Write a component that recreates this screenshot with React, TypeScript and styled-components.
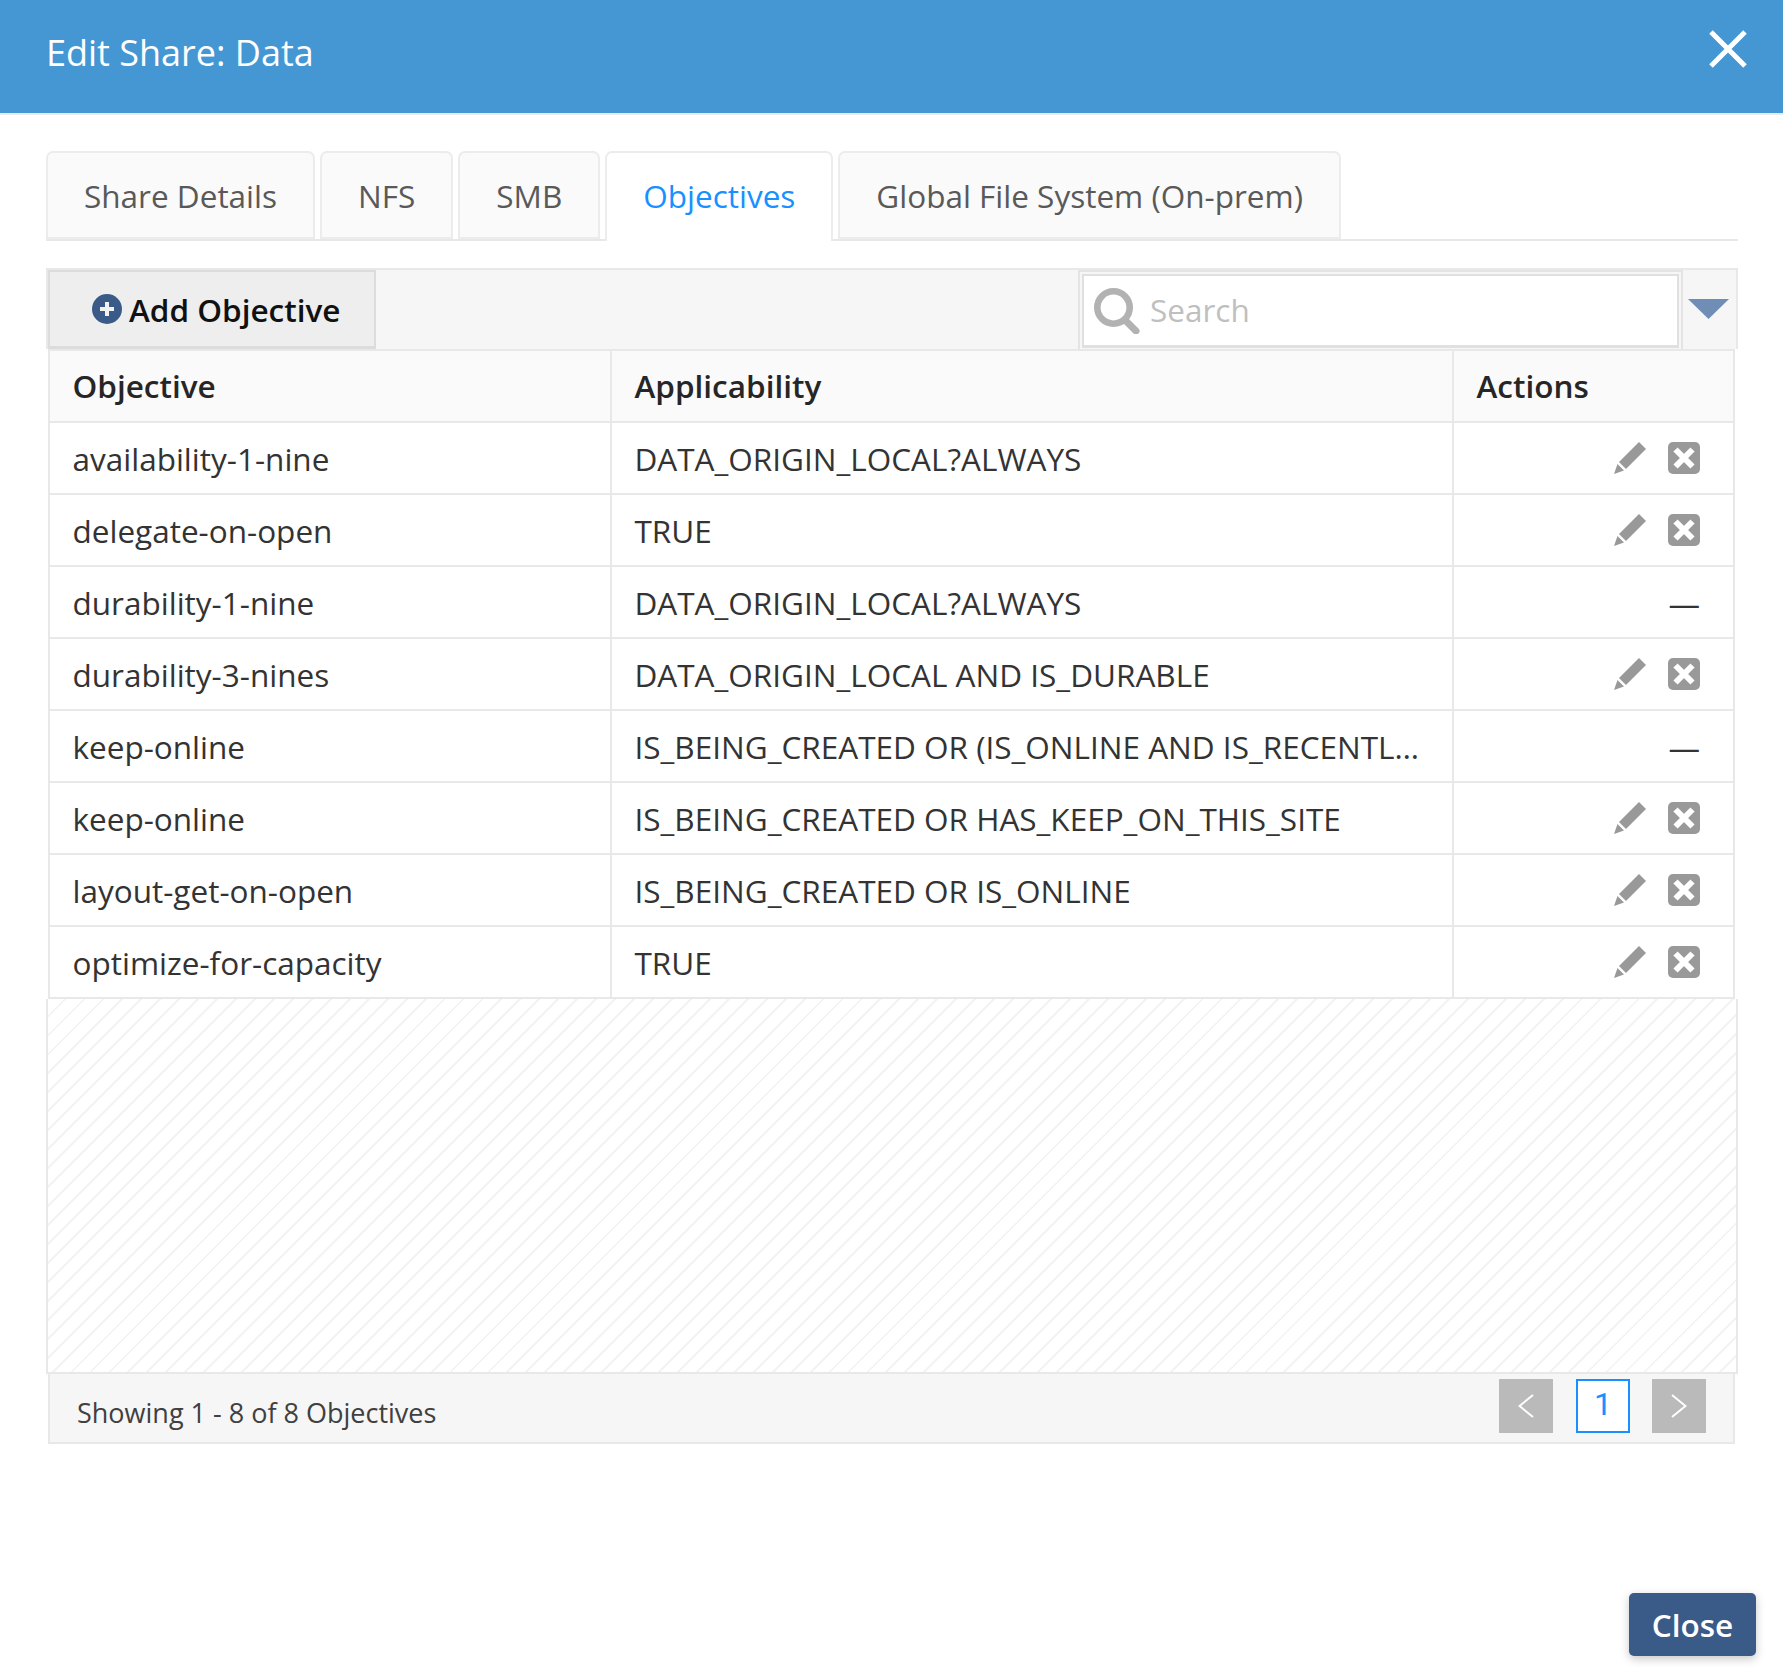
import React from "react";
import styled, { createGlobalStyle } from "styled-components";

const GlobalStyle = createGlobalStyle`
  html, body { margin: 0; padding: 0; background: #fff; }
  * { box-sizing: border-box; }
  body { font-family: "Open Sans", "Liberation Sans", sans-serif; }
`;

const Dialog = styled.div`
  width: 1783px;
  height: 1669px;
  display: flex;
  flex-direction: column;
  background: #fff;
`;

const Header = styled.header`
  height: 115px;
  flex: none;
  display: flex;
  align-items: center;
  justify-content: space-between;
  padding: 0 36px 8px 46px;
  background: #4497d3;
  border-bottom: 2px solid #e8eaec;
`;

const Title = styled.h1`
  margin: 0;
  font-size: 36px;
  font-weight: 400;
  color: #fff;
`;

const CloseIcon = styled.button`
  display: flex;
  padding: 0;
  border: 0;
  background: none;
  margin-bottom: 8px;
`;

const Body = styled.main`
  padding: 36px 45px 0 46px;
`;

const TabStrip = styled.nav`
  display: flex;
  gap: 5px;
  height: 90px;
  border-bottom: 2px solid #e8e8e8;
`;

const Tab = styled.div<{ $active?: boolean }>`
  height: ${(p) => (p.$active ? "90px" : "88px")};
  padding: ${(p) => (p.$active ? "0 36px 4px" : "0 36px")};
  display: flex;
  align-items: center;
  font-size: 31.5px;
  background: ${(p) => (p.$active ? "#fff" : "#fafafa")};
  color: ${(p) => (p.$active ? "#1890ff" : "#595959")};
  border: 2px solid #ececec;
  border-bottom: ${(p) => (p.$active ? "0" : "2px solid #ececec")};
  border-radius: 7px 7px 0 0;
  position: relative;
  z-index: 1;
`;

const Panel = styled.section`
  margin-top: 27px;
`;

const Toolbar = styled.div`
  height: 81px;
  display: flex;
  align-items: stretch;
  background: #f6f6f6;
  border: 2px solid #e8e8e8;
  border-bottom: 0;
`;

const AddButton = styled.button`
  width: 328px;
  height: 79px;
  display: flex;
  align-items: center;
  gap: 7px;
  padding: 0 0 0 42px;
  background: #eeeeee;
  border: 2px solid #dcdcdc;
  border-bottom-width: 3px;
  font-family: inherit;
  font-size: 31.5px;
  font-weight: 600;
  color: #111;
`;

const AddLabel = styled.span`
  padding-top: 1px;
`;

const SearchFrame = styled.div`
  margin-left: auto;
  width: 605px;
  height: 79px;
  padding: 2px 2px 1px;
  border: 2px solid #e4e4e4;
  border-bottom: 0;
`;

const SearchBox = styled.div`
  height: 100%;
  display: flex;
  align-items: center;
  gap: 10px;
  padding-left: 10px;
  background: #fff;
  border: 2px solid #e0e0e0;
  border-bottom-width: 3px;
`;

const SearchText = styled.span`
  padding-bottom: 2px;
  font-size: 31.5px;
  color: #bfbfbf;
`;

const Caret = styled.div`
  flex: 0 0 53px;
  display: flex;
  justify-content: center;
  padding: 29px 2px 0 0;
`;

const Table = styled.div`
  margin: 0 3px 0 2px;
  border: 2px solid #e8e8e8;
  border-bottom: 0;
`;

const Row = styled.div<{ $head?: boolean }>`
  height: 72px;
  display: grid;
  grid-template-columns: 560px 842px 1fr;
  border-bottom: 2px solid #e8e8e8;
  background: ${(p) => (p.$head ? "#fafafa" : "#fff")};
  font-size: 31.5px;
  font-weight: ${(p) => (p.$head ? 600 : 400)};
  color: ${(p) => (p.$head ? "#262626" : "#333")};
`;

const Cell = styled.div<{ $head?: boolean }>`
  display: flex;
  align-items: center;
  padding: ${(p) => (p.$head ? "0 20px 2px 22.5px" : "0 20px 0 22.5px")};
  white-space: nowrap;
  overflow: hidden;
  & + & { border-left: 2px solid #e8e8e8; }
`;

const ActionCell = styled(Cell)`
  justify-content: flex-end;
  gap: 22px;
  padding: 0 33px 0 22px;
`;

const Hatch = styled.div`
  height: 375px;
  border: 2px solid #e8e8e8;
  border-top: 0;
  background: repeating-linear-gradient(
    135deg,
    #ffffff 0,
    #ffffff 11.4px,
    #f3f3f3 11.4px,
    #f3f3f3 13.4px
  );
`;

const Footer = styled.footer`
  height: 72px;
  margin: -2px 3px 0 2px;
  display: flex;
  align-items: flex-start;
  justify-content: space-between;
  padding: 5px 27px 0 27px;
  background: #f6f6f6;
  border: 2px solid #e8e8e8;
  position: relative;
`;

const FooterText = styled.span`
  padding-top: 15px;
  font-size: 27px;
  color: #404040;
`;

const Pager = styled.div`
  display: flex;
  gap: 22px;
`;

const PageArrow = styled.div`
  width: 54px;
  height: 54px;
  display: flex;
  align-items: center;
  justify-content: center;
  background: #bababa;
`;

const PageNumber = styled.div`
  width: 54px;
  height: 54px;
  margin-left: 1px;
  display: flex;
  align-items: center;
  justify-content: center;
  padding-bottom: 4px;
  background: #fff;
  border: 2px solid #1890ff;
  font-family: Roboto, "Liberation Sans", sans-serif;
  font-size: 32px;
  color: #1890ff;
`;

const ActionBar = styled.div`
  display: flex;
  justify-content: flex-end;
  padding: 149px 27px 0 0;
`;

const CloseButton = styled.button`
  width: 127px;
  height: 63px;
  border: 0;
  border-radius: 5px;
  background: #3a5a87;
  box-shadow: 0 3px 10px rgba(0, 0, 0, 0.22);
  font-family: inherit;
  font-size: 31.5px;
  font-weight: 600;
  color: #fff;
`;

const XIcon = () => (
  <svg width="38" height="38" viewBox="0 0 38 38">
    <path d="M2 2 L36 36 M36 2 L2 36" stroke="#fff" strokeWidth="5" fill="none" />
  </svg>
);

const PlusIcon = () => (
  <svg width="30" height="30" viewBox="0 0 30 30">
    <circle cx="15" cy="15" r="15" fill="#3a5a87" />
    <path d="M15 8 V22 M8 15 H22" stroke="#f2f2f2" strokeWidth="4" />
  </svg>
);

const SearchIcon = () => (
  <svg width="46" height="46" viewBox="0 0 46 46">
    <circle cx="19.5" cy="19.5" r="16.2" stroke="#b2b2b2" strokeWidth="6.6" fill="none" />
    <path d="M31 32 L42 43" stroke="#b2b2b2" strokeWidth="7" strokeLinecap="round" fill="none" />
  </svg>
);

const CaretIcon = () => (
  <svg width="41" height="20" viewBox="0 0 41 20">
    <path d="M0 0 H41 L20.5 20 Z" fill="#6f8db5" />
  </svg>
);

const PencilIcon = () => (
  <svg width="32" height="32" viewBox="0 0 32 32">
    <path d="M25 0 L32 7 L12 27 L5 20 Z" fill="#999" />
    <path d="M3.5 22 L10 28.500 L0 32 Z" fill="#999" />
  </svg>
);

const BoxXIcon = () => (
  <svg width="32" height="32" viewBox="0 0 32 32">
    <rect width="32" height="32" rx="5" fill="#999" />
    <path d="M7.500 7.500 L24.500 24.500 M24.500 7.500 L7.500 24.500" stroke="#fff" strokeWidth="6" />
  </svg>
);

const ChevronIcon = ({ dir }: { dir: "left" | "right" }) => (
  <svg width="16" height="24" viewBox="0 0 16 24">
    <path
      d={dir === "left" ? "M15 1 L1.500 12 L15 23" : "M1 1 L14.500 12 L1 23"}
      stroke="#fff"
      strokeWidth="2"
      fill="none"
    />
  </svg>
);

const tabs = ["Share Details", "NFS", "SMB", "Objectives", "Global File System (On-prem)"];

const rows: [string, string, boolean][] = [
  ["availability-1-nine", "DATA_ORIGIN_LOCAL?ALWAYS", true],
  ["delegate-on-open", "TRUE", true],
  ["durability-1-nine", "DATA_ORIGIN_LOCAL?ALWAYS", false],
  ["durability-3-nines", "DATA_ORIGIN_LOCAL AND IS_DURABLE", true],
  ["keep-online", "IS_BEING_CREATED OR (IS_ONLINE AND IS_RECENTL…", false],
  ["keep-online", "IS_BEING_CREATED OR HAS_KEEP_ON_THIS_SITE", true],
  ["layout-get-on-open", "IS_BEING_CREATED OR IS_ONLINE", true],
  ["optimize-for-capacity", "TRUE", true],
];

export default function App() {
  return (
    <Dialog>
      <GlobalStyle />
      <Header>
        <Title>Edit Share: Data</Title>
        <CloseIcon aria-label="Close dialog">
          <XIcon />
        </CloseIcon>
      </Header>
      <Body>
        <TabStrip>
          {tabs.map((t) => (
            <Tab key={t} $active={t === "Objectives"}>
              {t}
            </Tab>
          ))}
        </TabStrip>
        <Panel>
          <Toolbar>
            <AddButton>
              <PlusIcon />
              <AddLabel>Add Objective</AddLabel>
            </AddButton>
            <SearchFrame>
              <SearchBox>
                <SearchIcon />
                <SearchText>Search</SearchText>
              </SearchBox>
            </SearchFrame>
            <Caret>
              <CaretIcon />
            </Caret>
          </Toolbar>
          <Table>
            <Row $head>
              <Cell $head>Objective</Cell>
              <Cell $head>Applicability</Cell>
              <Cell $head>Actions</Cell>
            </Row>
            {rows.map(([name, rule, editable], i) => (
              <Row key={i}>
                <Cell>{name}</Cell>
                <Cell>{rule}</Cell>
                <ActionCell>
                  {editable ? (
                    <>
                      <PencilIcon />
                      <BoxXIcon />
                    </>
                  ) : (
                    "—"
                  )}
                </ActionCell>
              </Row>
            ))}
          </Table>
          <Hatch />
          <Footer>
            <FooterText>Showing 1 - 8 of 8 Objectives</FooterText>
            <Pager>
              <PageArrow>
                <ChevronIcon dir="left" />
              </PageArrow>
              <PageNumber>1</PageNumber>
              <PageArrow>
                <ChevronIcon dir="right" />
              </PageArrow>
            </Pager>
          </Footer>
        </Panel>
      </Body>
      <ActionBar>
        <CloseButton>Close</CloseButton>
      </ActionBar>
    </Dialog>
  );
}
